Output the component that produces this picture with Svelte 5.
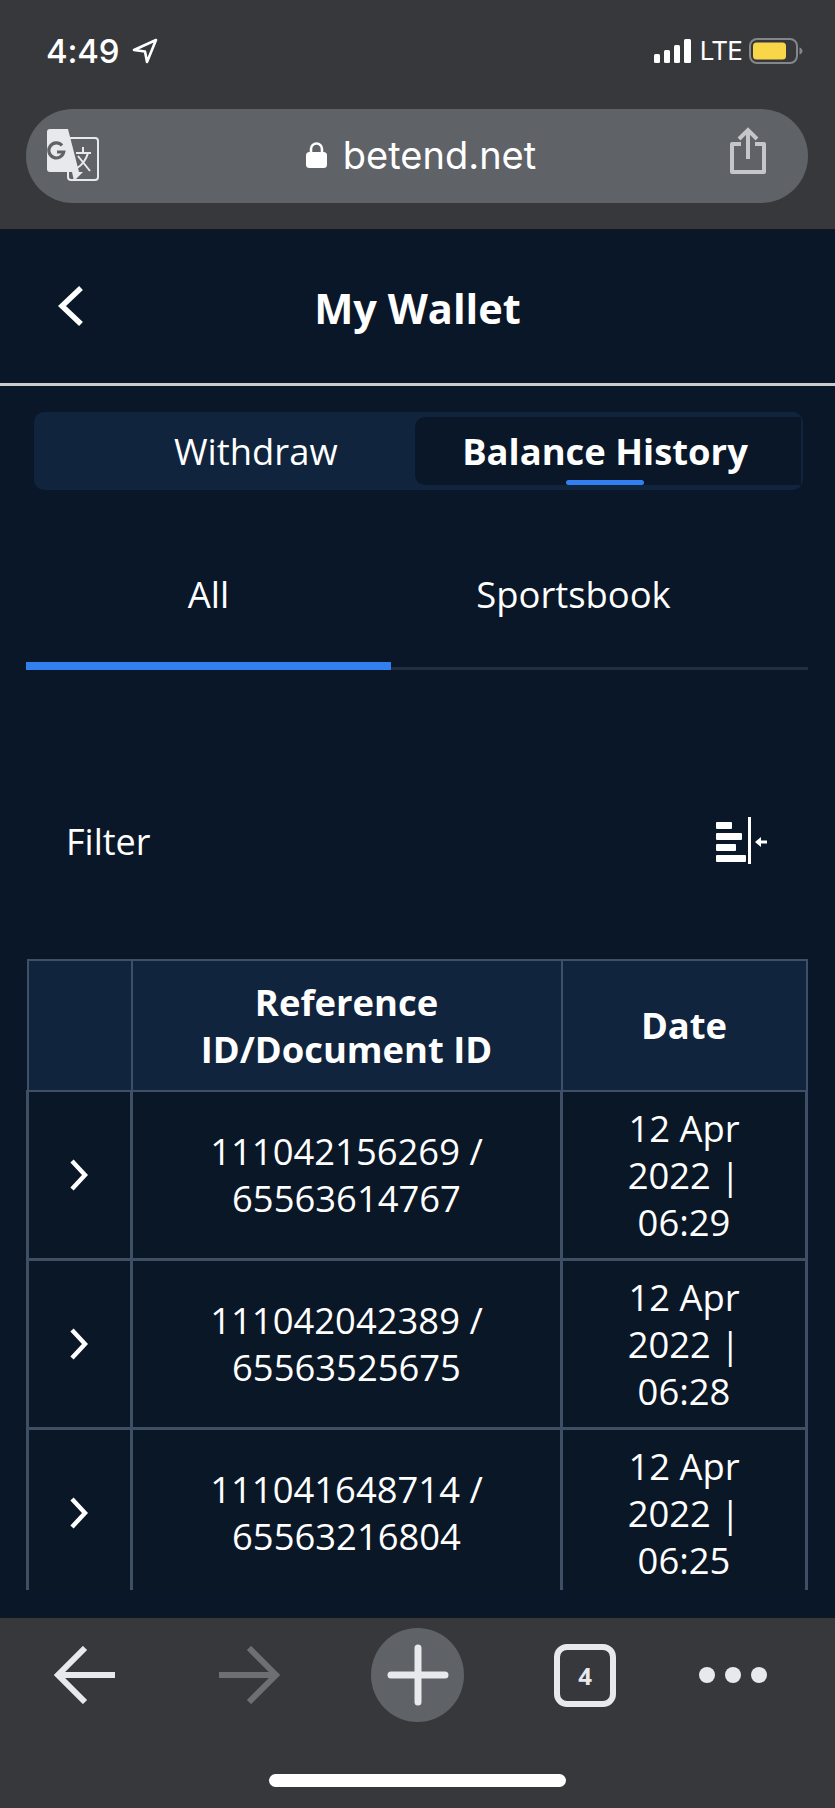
<!-- mobile browser capture of the wallet balance history page -->
<script lang="ts">
	const rows = [
		{ refId: '111042156269', docId: '65563614767', time: '06:29' },
		{ refId: '111042042389', docId: '65563525675', time: '06:28' },
		{ refId: '111041648714', docId: '65563216804', time: '06:25' }
	];
</script>

<div class="page">
	<header class="chrome-top">
		<div class="status">
			<div class="status-left">
				<span class="time">4:49</span>
				<svg class="loc" viewBox="0 0 26 26" width="26" height="26"><path d="M24 2 2 12l11 1.500L15 24z" fill="none" stroke="#fff" stroke-width="2.600" stroke-linejoin="round" /></svg>
			</div>
			<div class="status-right">
				<svg viewBox="0 0 37 24" width="37" height="24" fill="#fff">
					<rect x="0" y="15" width="6" height="9" rx="1.500" />
					<rect x="10" y="11" width="6" height="13" rx="1.500" />
					<rect x="20" y="6" width="6" height="18" rx="1.500" />
					<rect x="30" y="0" width="7" height="24" rx="1.500" />
				</svg>
				<span class="lte">LTE</span>
				<svg viewBox="0 0 54 26" width="54" height="26">
					<rect x="1" y="1" width="47" height="24" rx="7" fill="none" stroke="#85868a" stroke-width="2" />
					<rect x="4" y="4.500" width="33" height="17" rx="3.500" fill="#f8d648" />
					<path d="M50.500 9.500c2 .6 3 2 3 3.500s-1 2.900-3 3.500z" fill="#85868a" />
				</svg>
			</div>
		</div>
		<div class="address">
			<svg class="translate" viewBox="0 0 52 54" width="52" height="54">
				<rect x="21" y="9" width="30" height="42" rx="3" fill="#5f6266" stroke="#e8e9ec" stroke-width="2" />
				<path d="M3 0h18l11 43H3a3 3 0 0 1-3-3V3a3 3 0 0 1 3-3z" fill="#e8e9ec" />
				<path d="M25 43h11l-9 9z" fill="#e8e9ec" />
				<path d="M15 16.500a7.500 7.500 0 1 0 1.700 6.500H10" fill="none" stroke="#5f6266" stroke-width="3.200" />
				<path d="M29 24h15M36 18v6M41 24c-2 7-6 12-11 15M31 27l12 15" fill="none" stroke="#e8e9ec" stroke-width="2" />
			</svg>
			<div class="host">
				<svg viewBox="0 0 21 26" width="21" height="26"><path d="M5 11V7a5.500 5.500 0 0 1 11 0v4" fill="none" stroke="#fff" stroke-width="2.600" /><rect x="0" y="10" width="21" height="16" rx="3.500" fill="#fff" /></svg>
				<span>betend.net</span>
			</div>
			<svg class="share" viewBox="0 0 38 48" width="38" height="48" fill="none" stroke="#c4c6c9" stroke-width="4">
				<path d="M12 17H3v28h32V17h-9" stroke-linejoin="round" />
				<path d="M19 32V4M10 12l9-9 9 9" />
			</svg>
		</div>
	</header>

	<main class="content">
		<nav class="titlebar">
			<svg class="back" viewBox="0 0 26 40" width="26" height="40"><path d="M23 2 4 20l19 18" fill="none" stroke="#fff" stroke-width="5.500" /></svg>
			<h1>My Wallet</h1>
		</nav>

		<div class="segments">
			<div class="segment">Withdraw</div>
			<div class="segment active">Balance History<i></i></div>
		</div>

		<div class="subtabs">
			<div class="subtab on">All</div>
			<div class="subtab">Sportsbook</div>
		</div>

		<div class="filter">
			<span>Filter</span>
			<svg viewBox="0 0 51 48" width="51" height="48" fill="#fff">
				<rect x="0" y="5" width="16" height="7" rx="1" />
				<rect x="0" y="16" width="26" height="7" rx="1" />
				<rect x="0" y="27" width="20" height="7" rx="1" />
				<rect x="0" y="38" width="30" height="7" rx="1" />
				<rect x="32" y="0" width="3" height="47" />
				<path d="M39 25l6-5v3.500h6v3h-6v3.500z" />
			</svg>
		</div>

		<div class="table-wrap">
			<table>
				<thead>
					<tr>
						<th class="c-expand"></th>
						<th class="c-ref">Reference<br />ID/Document ID</th>
						<th>Date</th>
					</tr>
				</thead>
				<tbody>
					{#each rows as row}
						<tr>
							<td><svg class="chev" viewBox="0 0 20 32" width="20" height="32"><path d="M3 2l13 14L3 30" fill="none" stroke="#fff" stroke-width="4.400" /></svg></td>
							<td>{row.refId} /<br />{row.docId}</td>
							<td>12 Apr<br />2022 |<br />{row.time}</td>
						</tr>
					{/each}
				</tbody>
			</table>
		</div>
	</main>

	<footer class="chrome-bottom">
		<div class="toolbar">
			<svg viewBox="0 0 62 58" width="62" height="58" fill="none" stroke="#e8e9ec" stroke-width="6"><path d="M62 29H4M32 2 5 29l27 27" /></svg>
			<svg class="fwd" viewBox="0 0 62 58" width="62" height="58" fill="none" stroke="#6e6f72" stroke-width="6"><path d="M0 29h58M30 2l27 27-27 27" /></svg>
			<div class="plus"><svg viewBox="0 0 62 62" width="62" height="62" stroke="#e8e9ec" stroke-width="7" stroke-linecap="round"><path d="M4 31h54M31 4v54" /></svg></div>
			<div class="count">4</div>
			<div class="dots"><i></i><i></i><i></i></div>
		</div>
		<div class="home"></div>
	</footer>
</div>

<style>
	:global(body) {
		margin: 0;
		background: #091728;
	}
	.page {
		width: 835px;
		height: 1808px;
		display: flex;
		flex-direction: column;
		overflow: hidden;
		color: #fff;
		font-family: 'Open Sans', sans-serif;
	}

	/* browser chrome */
	.chrome-top {
		height: 229px;
		flex: none;
		background: #37383c;
		border-bottom: 1px solid #15171b;
		padding: 0 27px 0 26px;
		font-family: Inter, sans-serif;
		width: 782px;
	}
	.status {
		height: 102px;
		padding: 0 5px 7px 20px;
		display: flex;
		justify-content: space-between;
		align-items: center;
	}
	.status-left,
	.status-right {
		display: flex;
		align-items: center;
	}
	.status-left {
		gap: 13px;
	}
	.status-right svg:last-child {
		margin-left: 7px;
	}
	.time {
		font-size: 33px;
		font-weight: 500;
		letter-spacing: -0.2px;
	}
	.lte {
		font-size: 26px;
		font-weight: 400;
		margin-left: 9px;
		line-height: 1;
		letter-spacing: -0.8px;
	}
	.address {
		height: 94px;
		border-radius: 47px;
		background: #5f6266;
		display: flex;
		align-items: center;
		padding: 0 41px 0 21px;
		justify-content: space-between;
	}
	.host {
		display: flex;
		align-items: center;
		gap: 16px;
		font-size: 38px;
		font-weight: 400;
		color: #fff;
		margin: -3px 0 0 14px;
	}
	.share {
		margin-top: -10px;
	}

	.content {
		flex: 1;
		min-height: 0;
		overflow: hidden;
	}
	.titlebar {
		height: 153px;
		border-bottom: 3px solid #c9cbcc;
		display: flex;
		align-items: center;
		justify-content: center;
		position: relative;
	}
	.back {
		position: absolute;
		left: 58px;
		top: 56px;
	}
	h1 {
		margin: 3px 0 0;
		font-size: 41.500px;
		font-weight: 700;
	}

	.segments {
		margin: 26px 32px 0 34px;
		height: 78px;
		box-sizing: border-box;
		background: #10243d;
		border-radius: 10px;
		padding: 5px 2px 5px 0;
		display: grid;
		grid-template-columns: 381px 386px;
		font-size: 36.400px;
	}
	.segment {
		display: flex;
		align-items: center;
		justify-content: center;
		position: relative;
		border-radius: 10px 0 0 10px;
	}
	.segment:first-child {
		justify-content: flex-start;
		padding-left: 140px;
	}
	.segment.active {
		background: #091728;
		font-weight: 700;
		padding-right: 6px;
	}
	.segment i {
		position: absolute;
		left: 151px;
		bottom: 0;
		width: 78px;
		height: 5px;
		border-radius: 3px;
		background: #317ff0;
	}

	.subtabs {
		margin: 40px 27px 0 26px;
		display: grid;
		grid-template-columns: 365px 365px;
		border-bottom: 3px solid #202e40;
	}
	.subtab {
		height: 127px;
		padding-bottom: 5px;
		display: flex;
		align-items: center;
		justify-content: center;
		font-size: 36.400px;
		margin-bottom: -3px;
		border-bottom: 8px solid transparent;
	}
	.subtab.on {
		border-bottom-color: #317ff0;
	}

	.filter {
		margin: 141px 68px 0 66px;
		height: 60px;
		display: flex;
		align-items: center;
		justify-content: space-between;
		font-size: 36px;
	}

	.table-wrap {
		margin: 88px 27px 0 26px;
		height: 631px;
		overflow: hidden;
	}
	table {
		width: 782px;
		table-layout: fixed;
		border-collapse: collapse;
		font-size: 36.400px;
		text-align: center;
		line-height: 47px;
	}
	th,
	td {
		border: 2px solid #3f5066;
		padding: 0;
	}
	th {
		height: 129px;
		background: #10243d;
		font-weight: 700;
	}
	td {
		height: 166px;
		background: #0a1727;
		border-bottom-width: 3px;
		border-left-width: 3px;
		border-right-width: 3px;
	}
	.c-expand {
		width: 102px;
	}
	.c-ref {
		width: 428px;
	}
	.chev {
		display: block;
		margin: 0 auto;
		transform: translateX(-1px);
	}

	.chrome-bottom {
		flex: none;
		height: 190px;
		border-top: 1px solid #15171b;
		background: #37383c;
		display: flex;
		flex-direction: column;
		align-items: center;
	}
	.toolbar {
		width: 100%;
		box-sizing: border-box;
		height: 110px;
		padding: 4px 68px 0 53px;
		margin-bottom: 46px;
		display: flex;
		align-items: center;
	}
	.fwd {
		margin-left: 104px;
	}
	.plus {
		margin-left: 90px;
		width: 93px;
		height: 94px;
		border-radius: 50%;
		background: #5f6266;
		display: flex;
		align-items: center;
		justify-content: center;
	}
	.plus svg {
		display: block;
	}
	.count {
		margin-left: 90px;
		width: 62px;
		height: 63px;
		box-sizing: border-box;
		border: 6px solid #e8e9ec;
		border-radius: 13px;
		display: flex;
		align-items: center;
		justify-content: center;
		font-size: 24px;
		font-weight: 700;
		color: #e8e9ec;
	}
	.dots {
		margin-left: 83px;
		display: flex;
		gap: 10px;
	}
	.dots i {
		width: 16px;
		height: 16px;
		border-radius: 50%;
		background: #e8e9ec;
	}
	.home {
		width: 297px;
		height: 13px;
		border-radius: 7px;
		background: #fff;
	}
</style>
